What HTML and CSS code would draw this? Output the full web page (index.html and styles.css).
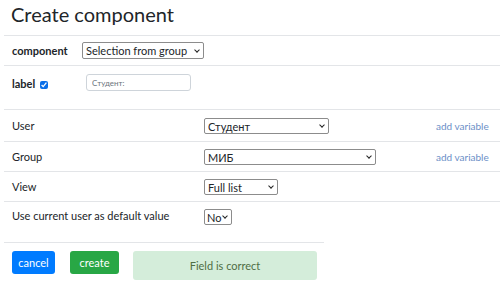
FILE: index.html
```html
<!DOCTYPE html>
<html lang="ru">
<head>
  <meta charset="UTF-8" />
  <title>Create component</title>
  <link rel="stylesheet" href="styles.css">
</head>
<body>
  <h1 class="title">Create component</h1>

  <div class="form">
    <div class="row row-component">
      <b class="name">component</b>
      <span class="pick">
        <select class="sel sel-component">
          <option>Selection from group members</option>
        </select>
      </span>
    </div>

    <div class="row row-label">
      <b class="name">label <input type="checkbox" class="check" checked></b>
      <input type="text" class="text-input" placeholder="Студент:">
    </div>

    <div class="props">
      <div class="prop">
        <span>User</span>
        <span class="pick"><select class="sel sel-user"><option>Студент</option></select></span>
        <a class="add-var">add variable</a>
      </div>
      <div class="prop">
        <span>Group</span>
        <span class="pick"><select class="sel sel-group"><option>МИБ</option></select></span>
        <a class="add-var">add variable</a>
      </div>
      <div class="prop">
        <span>View</span>
        <span class="pick"><select class="sel sel-view"><option>Full list</option></select></span>
        <span></span>
      </div>
      <div class="prop prop-last">
        <span>Use current user as default value</span>
        <span class="pick"><select class="sel sel-no"><option>No</option></select></span>
        <span></span>
      </div>
    </div>
  </div>

  <div class="footer">
    <button class="btn btn-cancel">cancel</button>
    <button class="btn btn-create">create</button>
    <div class="alert">Field is correct</div>
  </div>
</body>
</html>
```

FILE: styles.css
```css
* { box-sizing: border-box; }

body {
  margin: 0;
  font-family: 'Lato', 'Open Sans', sans-serif;
  font-size: 11px;
  color: #212529;
  background: #fff;
}

.title {
  margin: 0;
  height: 35px;
  padding: 2px 0 0 11px;
  font-family: 'Lato', sans-serif;
  font-size: 20px;
  font-weight: 400;
  line-height: 24px;
}

.form {
  margin-left: 4px;
}

.row {
  display: flex;
  border-top: 1px solid #e3e5e8;
  padding-left: 8px;
}

.row-component {
  height: 30px;
  align-items: center;
}

.row-component .name {
  width: 70px;
}

.row-label {
  height: 44px;
  padding-top: 8px;
}

.row-label .name {
  width: 74px;
  padding-top: 3px;
}

.name {
  font-weight: 700;
  color: #212529;
}

.check {
  width: 8px;
  height: 8px;
  margin: 0 0 0 2px;
  vertical-align: -1px;
  accent-color: #0b6fe8;
}

/* select with drawn chevron */
.pick {
  position: relative;
  display: inline-block;
  justify-self: start;
  line-height: 0;
}

.pick::after {
  content: "";
  position: absolute;
  right: 5px;
  top: 50%;
  width: 3px;
  height: 3px;
  margin-top: -3px;
  border-right: 1.5px solid #222;
  border-bottom: 1.5px solid #222;
  transform: rotate(45deg);
  pointer-events: none;
}

.sel {
  appearance: none;
  height: 17px;
  font-family: inherit;
  font-size: 11px;
  line-height: 15px;
  color: #212529;
  padding: 0 14px 0 3px;
  border: 1px solid #8c8c8c;
  border-radius: 2px;
  background: #fff;
  white-space: nowrap;
  overflow: hidden;
}

.sel-component { width: 122px; }
.sel-user { width: 125px; height: 16px; }
.sel-group { width: 172px; height: 16px; }
.sel-view { width: 74px; height: 16px; }
.sel-no { width: 28px; height: 16px; padding: 0 8px 0 2px; }

.text-input {
  width: 105px;
  height: 17px;
  font-family: inherit;
  font-size: 8px;
  padding: 0 5px;
  border: 1px solid #ced4da;
  border-radius: 3px;
}

.text-input::placeholder {
  color: #6c757d;
}

.props {
  border-top: 1px solid #e3e5e8;
}

.prop {
  display: grid;
  grid-template-columns: 192px 232px 1fr;
  align-items: center;
  height: 30px;
  padding-left: 8px;
  border-bottom: 1px solid #e3e5e8;
}

.prop:first-child {
  height: 32px;
}

.prop-last {
  height: 40px;
  align-items: start;
  padding-top: 7px;
  border-bottom: none;
}

.add-var {
  font-size: 10px;
  color: #6c8fc7;
}

.footer {
  display: flex;
  align-items: flex-start;
  width: 320px;
  margin-left: 4px;
  padding: 8px 0 0 8px;
  border-top: 1px solid #e3e5e8;
}

.btn {
  height: 23px;
  border: none;
  border-radius: 3px;
  color: #fff;
  font-family: inherit;
  font-size: 11px;
  padding: 0;
}

.btn-cancel {
  width: 43px;
  background: #007bff;
}

.btn-create {
  width: 49px;
  margin-left: 15px;
  background: #28a745;
}

.alert {
  width: 184px;
  height: 29px;
  margin-left: 14px;
  border-radius: 3px;
  background: #d4edda;
  color: #4f6e45;
  display: flex;
  align-items: center;
  justify-content: center;
}
```
